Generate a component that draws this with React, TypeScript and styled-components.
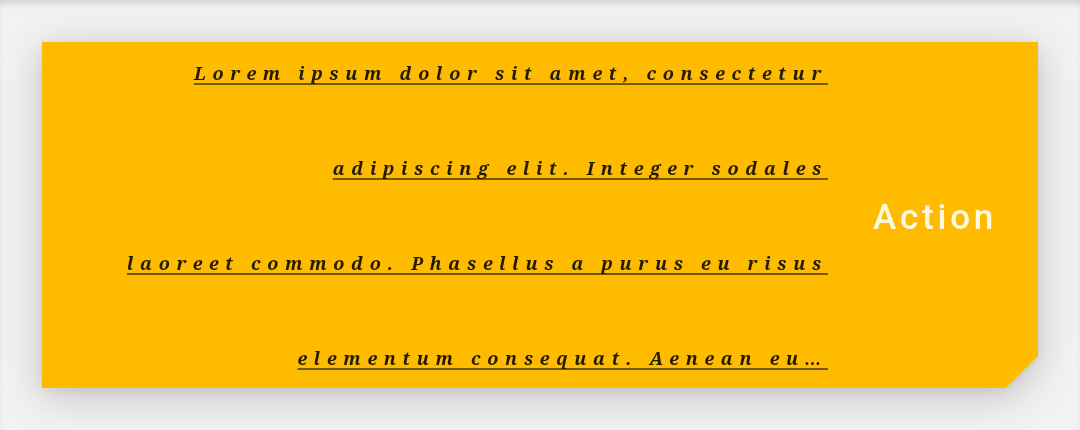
import React from "react";
import styled, { createGlobalStyle } from "styled-components";

const Global = createGlobalStyle`
  html, body { margin: 0; padding: 0; }
  body {
    background: #f2f2f2;
    width: 1080px;
    height: 430px;
    overflow: hidden;
    box-shadow: inset 0 6px 8px -4px rgba(0,0,0,0.18);
  }
`;

const Page = styled.div`
  padding: 42px;
`;

const Shadow = styled.div`
  filter: drop-shadow(0 8px 20px rgba(0, 0, 0, 0.2)) drop-shadow(0 2px 4px rgba(0,0,0,0.06));
`;

const Card = styled.div`
  height: 346px;
  background: #ffbb00;
  display: flex;
  align-items: center;
  clip-path: polygon(0 0, 100% 0, 100% calc(100% - 32px), calc(100% - 32px) 100%, 0 100%);
`;

const Body = styled.div`
  flex: 1;
  height: 100%;
  padding-top: 2px;
  display: flex;
  align-items: center;
  justify-content: flex-end;
`;

const Text = styled.p`
  margin: 0;
  font-family: "Noto Serif", "DejaVu Serif", serif;
  font-style: italic;
  font-weight: 700;
  font-size: 18px;
  letter-spacing: 6.7px;
  line-height: 95px;
  color: #231a00;
  text-align: right;
  white-space: nowrap;
  flex-shrink: 0;
`;

const Line = styled.span`
  text-decoration: underline;
  text-decoration-color: #735a00;
  text-decoration-thickness: 2px;
  text-underline-offset: 3px;
  text-decoration-skip-ink: none;
`;

const Action = styled.button`
  width: 210px;
  flex-shrink: 0;
  background: none;
  border: none;
  padding: 0 0 0 4px;
  margin-top: 4px;
  font-family: Roboto, "Noto Sans", sans-serif;
  font-weight: 500;
  font-size: 35px;
  letter-spacing: 3.8px;
  color: #fff8e1;
  text-align: center;
  cursor: pointer;
`;

const lines = [
  "Lorem ipsum dolor sit amet, consectetur",
  "adipiscing elit. Integer sodales",
  "laoreet commodo. Phasellus a purus eu risus",
  "elementum consequat. Aenean eu…",
];

export default function App() {
  return (
    <>
      <Global />
      <Page>
        <Shadow>
          <Card>
            <Body>
              <Text>
                {lines.map((l, i) => (
                  <React.Fragment key={i}>
                    <Line>{l}</Line>
                    {i < lines.length - 1 && <br />}
                  </React.Fragment>
                ))}
              </Text>
            </Body>
            <Action>Action</Action>
          </Card>
        </Shadow>
      </Page>
    </>
  );
}
